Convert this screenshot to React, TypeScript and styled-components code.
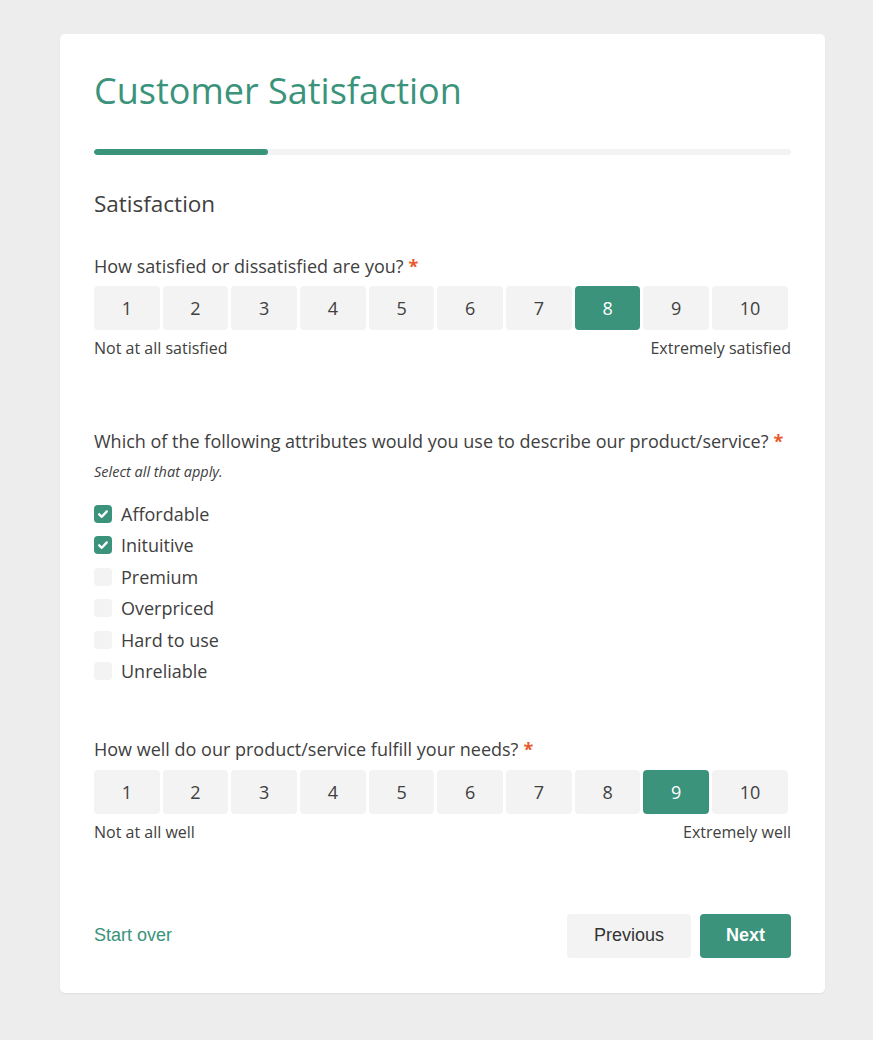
import React, { useState } from "react";
import styled, { createGlobalStyle } from "styled-components";

const GREEN = "#3a937a";
const TEXT = "#404040";

const GlobalStyle = createGlobalStyle`
  html, body { margin: 0; padding: 0; }
  body {
    background: #ededed;
    font-family: "Open Sans", "Noto Sans", sans-serif;
    color: ${TEXT};
  }
`;

const Page = styled.div`
  padding: 34px 48px 47px 60px;
`;

const Card = styled.div`
  background: #fff;
  border-radius: 5px;
  padding: 32px 34px 35px;
  box-shadow: 0 1px 2px rgba(0, 0, 0, 0.06);
`;

const Title = styled.h1`
  margin: 0;
  font-size: 36px;
  font-weight: 400;
  line-height: 49px;
  color: ${GREEN};
`;

const Progress = styled.div`
  margin-top: 34px;
  height: 6px;
  border-radius: 3px;
  background: #f3f3f3;
  overflow: hidden;
`;

const ProgressFill = styled.div`
  height: 100%;
  border-radius: 3px;
  background: ${GREEN};
`;

const SectionTitle = styled.h2`
  margin: 34px 0 0;
  font-size: 22.5px;
  font-weight: 400;
  line-height: 30px;
  color: ${TEXT};
`;

const Question = styled.div<{ $top: number }>`
  margin-top: ${(p) => p.$top}px;
`;

const QuestionText = styled.div`
  font-size: 18px;
  line-height: 24px;
`;

const Required = styled.span`
  color: #e8582a;
  font-weight: 700;
  margin-left: 5px;
`;

const Hint = styled.div`
  font-size: 14.5px;
  font-style: italic;
  line-height: 20px;
  margin-top: 9px;
`;

const RatingRow = styled.div<{ $top: number }>`
  display: flex;
  gap: 3px;
  padding-right: 3px;
  margin-top: ${(p) => p.$top}px;
`;

const RatingButton = styled.button<{ $active: boolean }>`
  flex: 1 1 auto;
  height: 44px;
  padding: 0;
  border: none;
  border-radius: 4px;
  background: ${(p) => (p.$active ? GREEN : "#f3f3f3")};
  color: ${(p) => (p.$active ? "#fff" : TEXT)};
  font-family: "Open Sans", sans-serif;
  font-size: 18px;
  cursor: pointer;
`;

const ScaleLabels = styled.div`
  display: flex;
  justify-content: space-between;
  font-size: 16px;
  line-height: 22px;
  margin-top: 7px;
`;

const CheckList = styled.div`
  display: flex;
  flex-direction: column;
  gap: 7.4px;
  margin-top: 20px;
`;

const CheckRow = styled.label`
  display: flex;
  align-items: center;
  gap: 9px;
  font-size: 18px;
  line-height: 24px;
  cursor: pointer;
`;

const Box = styled.span<{ $checked: boolean }>`
  width: 18px;
  height: 18px;
  border-radius: 4px;
  background: ${(p) => (p.$checked ? GREEN : "#f3f3f3")};
  display: inline-flex;
  align-items: center;
  justify-content: center;
  flex: none;
`;

const Footer = styled.div`
  display: flex;
  align-items: center;
  justify-content: space-between;
  margin-top: 71px;
`;

const LinkButton = styled.button`
  border: none;
  background: none;
  padding: 0;
  color: ${GREEN};
  font-family: "Liberation Sans", Arial, sans-serif;
  font-size: 18px;
  cursor: pointer;
`;

const NavGroup = styled.div`
  display: flex;
  gap: 9px;
`;

const NavButton = styled.button<{ $primary?: boolean }>`
  height: 44px;
  padding: 0 ${(p) => (p.$primary ? 26 : 27)}px;
  border: none;
  border-radius: 4px;
  background: ${(p) => (p.$primary ? GREEN : "#f3f3f3")};
  color: ${(p) => (p.$primary ? "#fff" : "#333")};
  font-family: "Liberation Sans", Arial, sans-serif;
  font-size: 18px;
  font-weight: ${(p) => (p.$primary ? 700 : 400)};
  cursor: pointer;
`;

const Check = () => (
  <svg width="12" height="12" viewBox="0 0 12 12">
    <path d="M2.2 6.3 L4.8 8.8 L9.8 3.4" fill="none" stroke="#fff" strokeWidth="2.3" strokeLinecap="round" strokeLinejoin="round" />
  </svg>
);

const Rating = ({ value, onChange, top }: { value: number; onChange: (n: number) => void; top: number }) => (
  <RatingRow $top={top}>
    {Array.from({ length: 10 }, (_, i) => i + 1).map((n) => (
      <RatingButton key={n} $active={n === value} onClick={() => onChange(n)}>
        {n}
      </RatingButton>
    ))}
  </RatingRow>
);

const ATTRS = ["Affordable", "Inituitive", "Premium", "Overpriced", "Hard to use", "Unreliable"];

export default function App() {
  const [q1, setQ1] = useState(8);
  const [q3, setQ3] = useState(9);
  const [checked, setChecked] = useState<string[]>(["Affordable", "Inituitive"]);
  const toggle = (a: string) =>
    setChecked((c) => (c.includes(a) ? c.filter((x) => x !== a) : [...c, a]));

  return (
    <>
      <GlobalStyle />
      <Page>
        <Card>
          <Title>Customer Satisfaction</Title>
          <Progress>
            <ProgressFill style={{ width: "25%" }} />
          </Progress>
          <SectionTitle>Satisfaction</SectionTitle>

          <Question $top={35}>
            <QuestionText>
              How satisfied or dissatisfied are you?<Required>*</Required>
            </QuestionText>
            <Rating value={q1} onChange={setQ1} top={8} />
            <ScaleLabels>
              <span>Not at all satisfied</span>
              <span>Extremely satisfied</span>
            </ScaleLabels>
          </Question>

          <Question $top={70}>
            <QuestionText>
              Which of the following attributes would you use to describe our product/service?
              <Required>*</Required>
            </QuestionText>
            <Hint>Select all that apply.</Hint>
            <CheckList>
              {ATTRS.map((a) => (
                <CheckRow key={a} onClick={() => toggle(a)}>
                  <Box $checked={checked.includes(a)}>{checked.includes(a) && <Check />}</Box>
                  {a}
                </CheckRow>
              ))}
            </CheckList>
          </Question>

          <Question $top={54}>
            <QuestionText>
              How well do our product/service fulfill your needs?<Required>*</Required>
            </QuestionText>
            <Rating value={q3} onChange={setQ3} top={9} />
            <ScaleLabels>
              <span>Not at all well</span>
              <span>Extremely well</span>
            </ScaleLabels>
          </Question>

          <Footer>
            <LinkButton>Start over</LinkButton>
            <NavGroup>
              <NavButton>Previous</NavButton>
              <NavButton $primary>Next</NavButton>
            </NavGroup>
          </Footer>
        </Card>
      </Page>
    </>
  );
}
